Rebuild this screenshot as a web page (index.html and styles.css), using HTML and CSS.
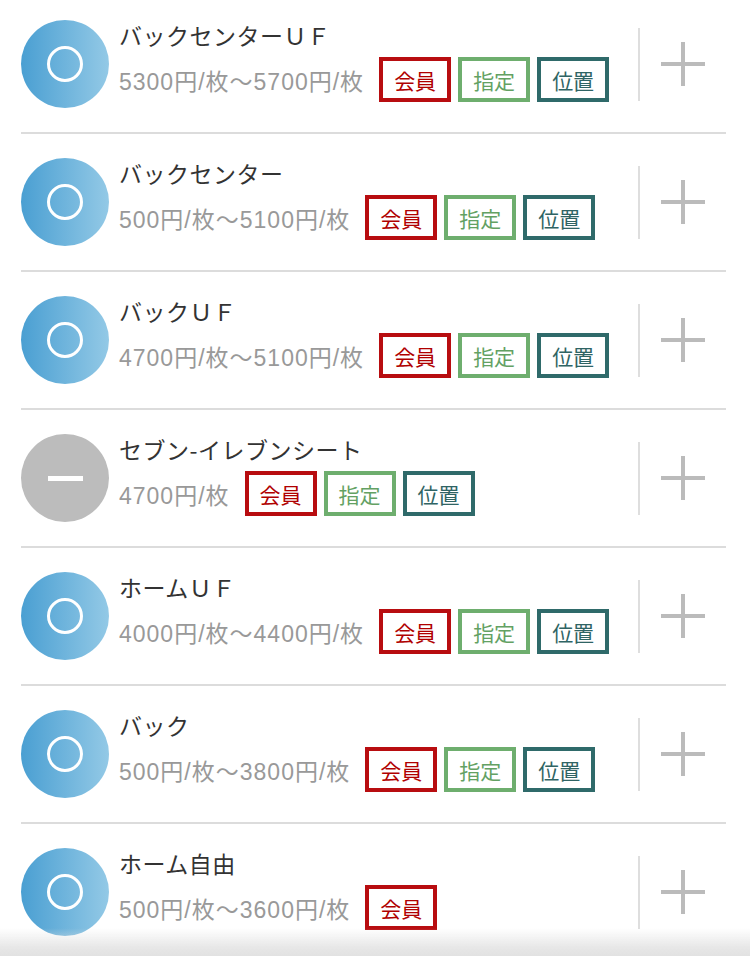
FILE: index.html
```html
<!DOCTYPE html>
<html lang="ja">
<head>
<meta charset="utf-8">
<link rel="stylesheet" href="styles.css">
</head>
<body>
<ul class="list">
  <li class="row">
    <div class="badge on"><span class="ring"></span></div>
    <div class="info">
      <div class="title">バックセンターＵＦ</div>
      <div class="line"><span class="price">5300円/枚～5700円/枚</span><span class="tag red">会員</span><span class="tag green">指定</span><span class="tag teal">位置</span></div>
    </div>
    <div class="add"><span class="plus"></span></div>
  </li>
  <li class="row">
    <div class="badge on"><span class="ring"></span></div>
    <div class="info">
      <div class="title">バックセンター</div>
      <div class="line"><span class="price">500円/枚～5100円/枚</span><span class="tag red">会員</span><span class="tag green">指定</span><span class="tag teal">位置</span></div>
    </div>
    <div class="add"><span class="plus"></span></div>
  </li>
  <li class="row">
    <div class="badge on"><span class="ring"></span></div>
    <div class="info">
      <div class="title">バックＵＦ</div>
      <div class="line"><span class="price">4700円/枚～5100円/枚</span><span class="tag red">会員</span><span class="tag green">指定</span><span class="tag teal">位置</span></div>
    </div>
    <div class="add"><span class="plus"></span></div>
  </li>
  <li class="row">
    <div class="badge off"><span class="bar"></span></div>
    <div class="info">
      <div class="title">セブン-イレブンシート</div>
      <div class="line"><span class="price">4700円/枚</span><span class="tag red">会員</span><span class="tag green">指定</span><span class="tag teal">位置</span></div>
    </div>
    <div class="add"><span class="plus"></span></div>
  </li>
  <li class="row">
    <div class="badge on"><span class="ring"></span></div>
    <div class="info">
      <div class="title">ホームＵＦ</div>
      <div class="line"><span class="price">4000円/枚～4400円/枚</span><span class="tag red">会員</span><span class="tag green">指定</span><span class="tag teal">位置</span></div>
    </div>
    <div class="add"><span class="plus"></span></div>
  </li>
  <li class="row">
    <div class="badge on"><span class="ring"></span></div>
    <div class="info">
      <div class="title">バック</div>
      <div class="line"><span class="price">500円/枚～3800円/枚</span><span class="tag red">会員</span><span class="tag green">指定</span><span class="tag teal">位置</span></div>
    </div>
    <div class="add"><span class="plus"></span></div>
  </li>
  <li class="row">
    <div class="badge on"><span class="ring"></span></div>
    <div class="info">
      <div class="title">ホーム自由</div>
      <div class="line"><span class="price">500円/枚～3600円/枚</span><span class="tag red">会員</span></div>
    </div>
    <div class="add"><span class="plus"></span></div>
  </li>
</ul>
<div class="shade"></div>
</body>
</html>
```
FILE: styles.css
```css
html, body {
  margin: 0;
  padding: 0;
  background: #fff;
  font-family: "Noto Sans CJK JP", "Noto Sans", sans-serif;
  overflow: hidden;
}
.list {
  list-style: none;
  margin: -4px 24px 0 21px;
  padding: 0;
}
.row {
  display: flex;
  align-items: center;
  height: 136px;
  border-bottom: 2px solid #dcdcdc;
}
.badge {
  width: 88px;
  height: 88px;
  border-radius: 50%;
  flex: none;
  display: flex;
  align-items: center;
  justify-content: center;
}
.badge.on {
  background: linear-gradient(90deg, #4a9fd2 0%, #93c9e6 100%);
}
.badge.off {
  background: #bcbcbc;
}
.ring {
  width: 30px;
  height: 30px;
  border: 3px solid #fff;
  border-radius: 50%;
}
.bar {
  width: 35px;
  height: 5px;
  background: #fff;
}
.info {
  flex: 1;
  min-width: 0;
  margin-left: 10px;
  padding-bottom: 6px;
}
.title {
  font-size: 23px;
  line-height: 30px;
  color: #333;
  letter-spacing: 0.5px;
  white-space: nowrap;
}
.line {
  display: flex;
  align-items: center;
  margin-top: 7px;
}
.price {
  font-family: "Liberation Sans", "Noto Sans CJK JP", sans-serif;
  font-size: 23px;
  letter-spacing: 1px;
  color: #999;
  white-space: nowrap;
  margin-right: 15px;
}
.tag {
  box-sizing: border-box;
  height: 45px;
  width: 72px;
  border: 4px solid;
  display: flex;
  align-items: center;
  justify-content: center;
  font-size: 21px;
  margin-right: 7px;
  flex: none;
}
.tag.red { border-color: #b80d10; color: #b00000; }
.tag.green { border-color: #6eae6e; color: #63a163; }
.tag.teal { border-color: #2f6a6a; color: #2f6464; }
.add {
  flex: none;
  width: 86px;
  height: 73px;
  border-left: 2px solid #dedede;
  display: flex;
  align-items: center;
  justify-content: center;
  margin-left: 4px;
}
.plus {
  position: relative;
  width: 44px;
  height: 44px;
}
.plus::before,
.plus::after {
  content: "";
  position: absolute;
  background: #bbb;
}
.plus::before {
  left: 20px;
  top: 0;
  width: 4px;
  height: 44px;
}
.plus::after {
  top: 20px;
  left: 0;
  width: 44px;
  height: 4px;
}
.shade {
  position: fixed;
  left: 0;
  right: 0;
  bottom: 0;
  height: 28px;
  background: linear-gradient(180deg, rgba(230,230,230,0) 0%, rgba(225,225,225,0.8) 70%, #e2e2e2 100%);
}
```
